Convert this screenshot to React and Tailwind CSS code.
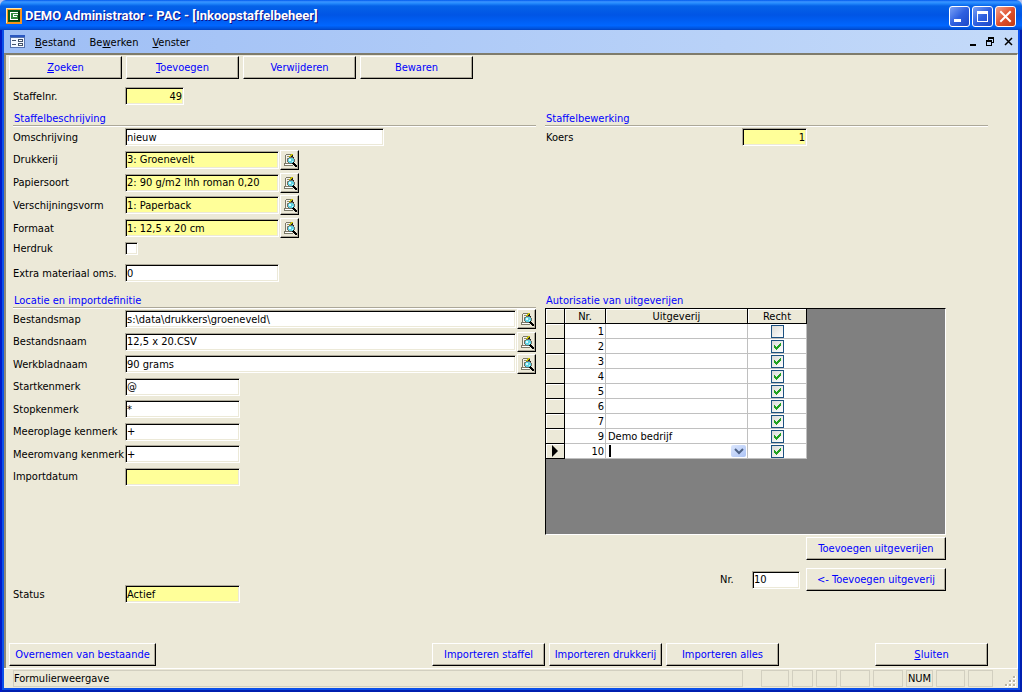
import { useState } from "react";

const TOOLBAR = [
  { key: "Z", rest: "oeken" },
  { key: "T", rest: "oevoegen" },
  { key: "", rest: "Verwijderen" },
  { key: "", rest: "Bewaren" },
];

const DESCRIPTION = [
  { id: "omschrijving", label: "Omschrijving", value: "nieuw", width: "w-[259px]" },
  { id: "drukkerij", label: "Drukkerij", value: "3: Groenevelt", locked: true, lookup: true },
  { id: "papiersoort", label: "Papiersoort", value: "2: 90 g/m2 lhh roman 0,20", locked: true, lookup: true },
  { id: "verschijningsvorm", label: "Verschijningsvorm", value: "1: Paperback", locked: true, lookup: true },
  { id: "formaat", label: "Formaat", value: "1: 12,5 x 20 cm", locked: true, lookup: true },
];

const LOCATION = [
  { id: "map", label: "Bestandsmap", value: "s:\\data\\drukkers\\groeneveld\\", width: "flex-1", lookup: true },
  { id: "naam", label: "Bestandsnaam", value: "12,5 x 20.CSV", width: "flex-1", lookup: true },
  { id: "werkblad", label: "Werkbladnaam", value: "90 grams", width: "flex-1", lookup: true },
  { id: "start", label: "Startkenmerk", value: "@", width: "w-[115px]" },
  { id: "stop", label: "Stopkenmerk", value: "*", width: "w-[115px]" },
  { id: "oplage", label: "Meeroplage kenmerk", value: "+", width: "w-[115px]" },
  { id: "omvang", label: "Meeromvang kenmerk", value: "+", width: "w-[115px]" },
  { id: "datum", label: "Importdatum", value: "", width: "w-[115px]", locked: true },
];

const PUBLISHERS = [
  { nr: 1, name: "", allowed: false },
  { nr: 2, name: "", allowed: true },
  { nr: 3, name: "", allowed: true },
  { nr: 4, name: "", allowed: true },
  { nr: 5, name: "", allowed: true },
  { nr: 6, name: "", allowed: true },
  { nr: 7, name: "", allowed: true },
  { nr: 9, name: "Demo bedrijf", allowed: true },
  { nr: 10, name: "", allowed: true },
];

const STATUS_CELLS = [
  { width: "w-7" },
  { width: "w-[21px]" },
  { width: "w-[21px]" },
  { width: "w-[30px]" },
  { width: "w-[30px]" },
  { width: "w-[27px]", text: "NUM" },
  { width: "w-[29px]" },
  { width: "w-[25px]" },
];

function Button({ className = "h-[23px] w-[113px]", children, ...props }) {
  return (
    <button
      type="button"
      className={`shrink-0 whitespace-nowrap border border-t-white border-l-white border-r-black border-b-black bg-[#ece9d8] text-center text-[#0000ff] shadow-[inset_-1px_-1px_0_#aca899] ${className}`}
      {...props}
    >
      {children}
    </button>
  );
}

function Input({ className = "", locked, ...props }) {
  return (
    <input
      type="text"
      readOnly={locked}
      className={`h-[18px] min-w-0 border border-t-[#aca899] border-l-[#aca899] border-r-white border-b-white px-px shadow-[inset_1px_1px_0_#000,inset_-1px_-1px_0_#ece9d8] outline-none ${locked ? "bg-[#ffff99]" : "bg-white"} ${className}`}
      {...props}
    />
  );
}

function LookupIcon() {
  return (
    <svg width="14" height="14" viewBox="0 0 14 14" shapeRendering="crispEdges" aria-hidden="true">
      <path d="M3 1h7v9H3z" fill="#f4f2e8" />
      <path d="M3 1h6v1H3zM2 2h1v8H2zM1 10h7v1H1zM1 11h1v1H1zM1 12h9v1H1z" fill="#7b7968" />
      <path d="M2 11h7v1H2z" fill="#ffffff" />
      <path d="M4 3h3v1H4zM4 5h1v1H4z" fill="#8c8a78" />
      <path d="M8 1h2v1H8zM7 2h2v1H7zM6 3h2v1H6z" fill="#c8c000" />
      <path d="M9 2h1v2h1v2H9V4H8V3h1z" fill="#222222" />
      <path d="M6 4h4v1h1v1h1v3h-1v1h-1v1H6v-1H5V9H4V6h1V5h1z" fill="#6c6c64" />
      <path d="M6 5h4v1h1v3h-1v1H6V9H5V6h1z" fill="#5fd3e4" />
      <path d="M6 6h2v2H6zM9 8h1v1H9z" fill="#d8fbff" />
      <path d="M10 9h1v1h1v1h1v1h1v2h-2v-1h-1v-1h-1v-1H9v-1h1z" fill="#000000" />
    </svg>
  );
}

function Field({ id, label, value, width = "w-[154px]", locked, lookup }) {
  return (
    <div className="flex h-5 items-center">
      <label htmlFor={id} className="w-28 shrink-0 whitespace-nowrap">
        {label}
      </label>
      <Input id={id} defaultValue={value} locked={locked} className={width} />
      {lookup && (
        <Button
          aria-label={`${label} zoeken`}
          className="ml-px flex h-5 w-[19px] items-center justify-center"
        >
          <LookupIcon />
        </Button>
      )}
    </div>
  );
}

function SectionTitle({ children }) {
  return (
    <h2 className="h-[17px] border-b border-white pt-px pl-px text-[#0000ff] shadow-[inset_0_-1px_0_#aca899]">
      {children}
    </h2>
  );
}

function RightBox({ nr, checked, onChange }) {
  return (
    <span className="relative mx-auto block h-[13px] w-[13px]">
      <input
        type="checkbox"
        aria-label={`Recht ${nr}`}
        checked={checked}
        onChange={onChange}
        className="block h-[13px] w-[13px] appearance-none border border-[#1c5180] bg-linear-to-br from-[#dcdcd7] to-white"
      />
      {checked && (
        <svg
          viewBox="0 0 13 13"
          className="pointer-events-none absolute inset-0"
          shapeRendering="crispEdges"
          aria-hidden="true"
        >
          <path
            d="M3 5h1v1h1v1h1V6h1V5h1V4h1V3h1v3H9v1H8v1H7v1H6v1H5V9H4V8H3z"
            fill="#21a121"
          />
        </svg>
      )}
    </span>
  );
}

function PublisherTable() {
  const [rows, setRows] = useState(PUBLISHERS);

  const toggle = (nr) =>
    setRows((list) =>
      list.map((row) => (row.nr === nr ? { ...row, allowed: !row.allowed } : row)),
    );

  const head =
    "h-[15px] border-r border-b border-black bg-[#ece9d8] p-0 text-center font-normal shadow-[inset_1px_1px_0_#fff]";
  const cell = "h-[15px] border-r border-b border-[#c0c0c0] bg-white p-0";

  return (
    <div className="h-[227px] w-[401px] border border-t-black border-l-black border-r-white border-b-white bg-[#808080]">
      <table className="w-[261px] table-fixed border-separate border-spacing-0 leading-[13px]">
        <thead>
          <tr>
            <th className={`${head} w-[19px]`} aria-label="Rij" />
            <th className={`${head} w-[41px]`}>
              <span className="block pt-px">Nr.</span>
            </th>
            <th className={`${head} w-[142px]`}>
              <span className="block pt-px">Uitgeverij</span>
            </th>
            <th className={head}>
              <span className="block pt-px">Recht</span>
            </th>
          </tr>
        </thead>
        <tbody>
          {rows.map((row) => (
            <tr key={row.nr}>
              <td className={head}>
                {row.nr === 10 && (
                  <svg width="6" height="12" viewBox="0 0 6 12" className="mx-auto" aria-hidden="true">
                    <path d="M0 0l6 6-6 6z" />
                  </svg>
                )}
              </td>
              <td className={`${cell} text-right`}>
                <span className="block pt-px pr-px">{row.nr}</span>
              </td>
              <td className={cell}>
                {row.nr === 10 ? (
                  <div className="flex h-[14px] items-center pr-px pl-[3px]">
                    <span className="h-3 w-[2px] bg-black" />
                    <div className="relative ml-auto h-3 w-[15px]">
                      <select
                        aria-label="Uitgeverij"
                        className="block h-3 w-[15px] appearance-none rounded-xs bg-linear-to-br from-[#dbe6fd] to-[#adc4f5] text-transparent"
                      >
                        <option value=""></option>
                        <option>Demo bedrijf</option>
                      </select>
                      <svg
                        viewBox="0 0 15 12"
                        className="pointer-events-none absolute inset-0"
                        aria-hidden="true"
                      >
                        <path d="M4 4l4 4 4-4" fill="none" stroke="#4d6185" strokeWidth="2" />
                      </svg>
                    </div>
                  </div>
                ) : (
                  <span className="block pt-px pl-[2px]">{row.name}</span>
                )}
              </td>
              <td className={cell}>
                <RightBox nr={row.nr} checked={row.allowed} onChange={() => toggle(row.nr)} />
              </td>
            </tr>
          ))}
        </tbody>
      </table>
    </div>
  );
}

function TitleBar() {
  const control =
    "flex h-[21px] w-[21px] items-center justify-center rounded-[3px] border border-white";

  return (
    <header className="flex h-[30px] items-center rounded-t-md bg-[linear-gradient(to_bottom,#0058ee_0%,#3b93ff_6%,#288eff_10%,#0562e8_20%,#0055e5_50%,#0066ff_85%,#0051d8_96%,#0040c0_100%)] pt-[2px] pr-[6px] pl-[6px]">
      <svg width="16" height="16" viewBox="0 0 16 16" shapeRendering="crispEdges" aria-hidden="true">
        <path d="M0 0h16v16H0z" fill="#f7941d" />
        <path d="M0 0h15v1H1v14H0z" fill="#ffe9a8" />
        <path d="M2 2h12v12H2z" fill="#0b5a1c" />
        <path d="M4 4h8v1H5v6h7v1H4z" fill="#ffffff" />
        <path d="M5 5h7v6H5z" fill="#2f8a3c" />
        <path d="M7 6h5v1H8v1h3v1H7z" fill="#ffffff" />
        <path d="M12 3h2v10H3v-1h9z" fill="#06380f" />
      </svg>
      <h1 className="ml-[3px] flex-1 whitespace-nowrap font-['Roboto',sans-serif] text-[13px] leading-5 font-bold text-white [text-shadow:1px_1px_0_#0f1089]">
        DEMO Administrator - PAC - [Inkoopstaffelbeheer]
      </h1>
      <div className="flex gap-[2px]">
        <button type="button" aria-label="Minimaliseren" className={`${control} bg-linear-to-br from-[#7ba0f5] via-[#2f60e0] to-[#1c48c8]`}>
          <svg width="19" height="19" viewBox="0 0 19 19" aria-hidden="true">
            <path d="M4 12h7v3H4z" fill="#fff" />
          </svg>
        </button>
        <button type="button" aria-label="Maximaliseren" className={`${control} bg-linear-to-br from-[#7ba0f5] via-[#2f60e0] to-[#1c48c8]`}>
          <svg width="19" height="19" viewBox="0 0 19 19" aria-hidden="true">
            <path d="M4 4h11v11H4zM5 7v7h9V7z" fill="#fff" fillRule="evenodd" />
          </svg>
        </button>
        <button type="button" aria-label="Venster sluiten" className={`${control} bg-linear-to-br from-[#f0a088] via-[#e0502c] to-[#c03c10]`}>
          <svg width="19" height="19" viewBox="0 0 19 19" aria-hidden="true">
            <path d="M5 5l9 9M14 5l-9 9" stroke="#fff" strokeWidth="2" strokeLinecap="square" />
          </svg>
        </button>
      </div>
    </header>
  );
}

function MenuBar() {
  return (
    <nav className="flex h-[23px] items-center bg-linear-to-r from-[#9ebef5] to-[#c4daf9] pr-1 pl-[6px]">
      <svg width="15" height="13" viewBox="0 0 15 13" shapeRendering="crispEdges" aria-hidden="true">
        <path d="M0 0h15v13H0z" fill="#5473b0" />
        <path d="M0 0h15v2H0z" fill="#2a57c0" />
        <path d="M1 3h13v9H1z" fill="#f4f8ff" />
        <path d="M2 5h4v1H2zM2 9h4v1H2z" fill="#44546c" />
        <path d="M8 4h5v3H8zM8 8h5v3H8z" fill="#44546c" />
        <path d="M9 5h3v1H9zM9 9h3v1H9z" fill="#ffffff" />
      </svg>
      <div className="flex gap-[14px] pt-px pl-[10px]">
        <button type="button"><u>B</u>estand</button>
        <button type="button">Be<u>w</u>erken</button>
        <button type="button"><u>V</u>enster</button>
      </div>
      <div className="ml-auto flex gap-2">
        <button type="button" aria-label="Formulier minimaliseren">
          <svg width="10" height="10" viewBox="0 0 10 10" shapeRendering="crispEdges" aria-hidden="true">
            <path d="M2 7h6v2H2z" />
          </svg>
        </button>
        <button type="button" aria-label="Formulier herstellen">
          <svg width="10" height="10" viewBox="0 0 10 10" shapeRendering="crispEdges" aria-hidden="true">
            <path d="M2 0h6v6H6V5h1V2H3v1H2zM0 3h6v6H0zM1 5v3h4V5z" fillRule="evenodd" />
          </svg>
        </button>
        <button type="button" aria-label="Formulier sluiten">
          <svg width="10" height="10" viewBox="0 0 10 10" aria-hidden="true">
            <path d="M1 1l7 7M8 1l-7 7" stroke="#000" strokeWidth="1.5" />
          </svg>
        </button>
      </div>
    </nav>
  );
}

function StatusBar() {
  return (
    <footer className="flex h-5 items-center gap-[3px] border-t border-white bg-[#ece9d8] pr-px pl-[9px]">
      <span className="mr-[15px] h-[17px] flex-1 border border-[#d2cfc0] leading-[15px]">
        Formulierweergave
      </span>
      {STATUS_CELLS.map((item, i) => (
        <span
          key={i}
          className={`h-[17px] border border-[#d2cfc0] text-center leading-[15px] ${item.width}`}
        >
          {item.text}
        </span>
      ))}
      <svg width="12" height="12" viewBox="0 0 12 12" className="ml-[9px] self-end" aria-hidden="true">
        <path
          d="M8 0h3v3H8zM4 4h3v3H4zM8 4h3v3H8zM0 8h3v3H0zM4 8h3v3H4zM8 8h3v3H8z"
          fill="#ffffff"
        />
        <path
          d="M8 0h2v2H8zM4 4h2v2H4zM8 4h2v2H8zM0 8h2v2H0zM4 8h2v2H4zM8 8h2v2H8z"
          fill="#b8b4a2"
        />
      </svg>
    </footer>
  );
}

export default function App() {
  return (
    <div className="flex min-h-screen flex-col bg-[#b9c5ee] font-['DejaVu_Sans_Condensed',sans-serif] text-[11px] leading-[15px] text-black">
      <TitleBar />
      <div className="flex flex-1 flex-col bg-[#0c50ea] px-1 pb-1 shadow-[inset_2px_0_0_#0019c8,inset_-2px_-2px_0_#001fb0]">
        <MenuBar />

        <main className="flex flex-1 flex-col border-t-2 border-r border-l-2 border-t-[#7f7c6c] border-r-white border-l-[#8c8978] bg-[#ece9d8] pt-px pr-[29px] pb-[2px] pl-[3px]">
          <div className="flex gap-1">
            {TOOLBAR.map((item) => (
              <Button key={item.rest}>
                {item.key && <u>{item.key}</u>}
                {item.rest}
              </Button>
            ))}
          </div>

          <div className="mt-[7px] pl-1">
            <div className="flex h-5 items-center">
              <label htmlFor="staffelnr" className="w-28 shrink-0">Staffelnr.</label>
              <Input id="staffelnr" defaultValue="49" locked className="w-[59px] text-right" />
            </div>

            <div className="mt-1 grid grid-cols-[minmax(0,523fr)_minmax(0,443fr)] gap-[9px]">
              <div>
                <SectionTitle>Staffelbeschrijving</SectionTitle>
                <div className="flex h-[111px] flex-col justify-between">
                  {DESCRIPTION.map((item) => (
                    <Field key={item.id} {...item} />
                  ))}
                </div>
                <div className="flex h-5 items-center">
                  <label htmlFor="herdruk" className="w-28">Herdruk</label>
                  <input
                    id="herdruk"
                    type="checkbox"
                    className="h-[13px] w-[13px] appearance-none border border-t-[#aca899] border-l-[#aca899] border-r-white border-b-white bg-white shadow-[inset_1px_1px_0_#000,inset_-1px_-1px_0_#ece9d8] checked:bg-black"
                  />
                </div>
                <div className="mt-[5px]">
                  <Field id="extra" label="Extra materiaal oms." value="0" />
                </div>

                <div className="mt-[9px]">
                  <SectionTitle>Locatie en importdefinitie</SectionTitle>
                  <div className="flex h-[178px] flex-col justify-between">
                    {LOCATION.map((item) => (
                      <Field key={item.id} {...item} />
                    ))}
                  </div>
                </div>

                <div className="mt-[97px]">
                  <Field id="status" label="Status" value="Actief" width="w-[115px]" locked />
                </div>
              </div>

              <div>
                <SectionTitle>Staffelbewerking</SectionTitle>
                <div className="flex h-5 items-center">
                  <label htmlFor="koers" className="w-[197px] pl-px">Koers</label>
                  <Input id="koers" defaultValue="1" locked className="w-[65px] text-right" />
                </div>

                <h2 className="mt-[145px] h-4 pt-px pl-px text-[#0000ff]">Autorisatie van uitgeverijen</h2>
                <PublisherTable />
                <div className="mt-[2px] flex w-[401px] flex-col items-end gap-2">
                  <Button className="h-[23px] w-[140px]">Toevoegen uitgeverijen</Button>
                  <div className="flex items-center">
                    <label htmlFor="nr" className="w-8">Nr.</label>
                    <Input id="nr" defaultValue="10" className="mr-[6px] w-12" />
                    <Button className="h-[23px] w-[140px]">&lt;- Toevoegen uitgeverij</Button>
                  </div>
                </div>
              </div>
            </div>
          </div>

          <div className="mt-auto flex">
            <Button className="mr-auto h-[23px] w-[147px]">Overnemen van bestaande</Button>
            <div className="mr-24 flex gap-1">
              <Button>Importeren staffel</Button>
              <Button>Importeren drukkerij</Button>
              <Button>Importeren alles</Button>
            </div>
            <Button><u>S</u>luiten</Button>
          </div>
        </main>

        <StatusBar />
      </div>
    </div>
  );
}
